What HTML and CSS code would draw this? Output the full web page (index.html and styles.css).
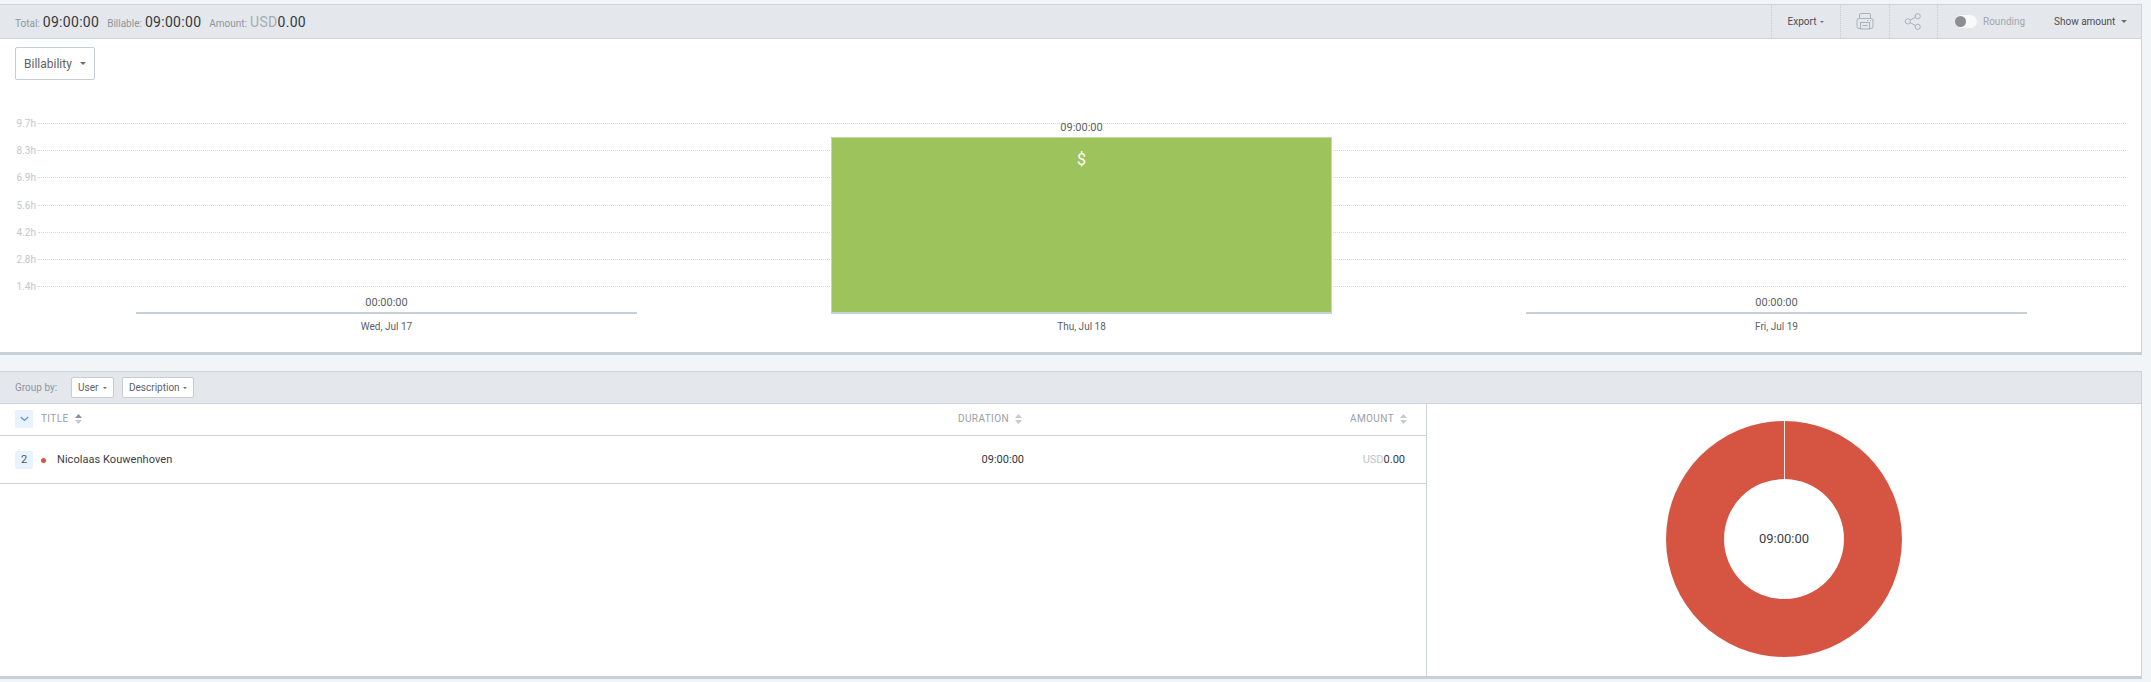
FILE: index.html
```html
<!DOCTYPE html>
<html lang="en">
<head>
    <meta charset="UTF-8">
    <title>Summary report</title>
    <link rel="stylesheet" href="styles.css">
</head>
<body>
    <!-- Bar chart panel -->
    <section class="panel panel-chart">
        <header class="bar">
            <div class="totals">
                <span class="total-label">Total:</span>
                <span class="total-value">09:00:00</span>
                <span class="total-label next">Billable:</span>
                <span class="total-value">09:00:00</span>
                <span class="total-label next">Amount:</span>
                <span class="total-value"><span class="currency">USD</span>0.00</span>
            </div>
            <div class="tools">
                <div class="tool tool-export">Export <i class="caret small"></i></div>
                <div class="tool tool-icon">
                    <svg width="18" height="17" viewBox="0 0 18 17" fill="none" stroke="#a9b1b8" stroke-width="1">
                        <path d="M3.5 5.5V2a1.5 1.5 0 0 1 1.5-1.5h8A1.5 1.5 0 0 1 14.500 2v3.500"/>
                        <rect x="1" y="5.500" width="16" height="10" rx="2"/>
                        <rect x="4.500" y="9.500" width="9" height="6.500" fill="#e4e8ed"/>
                        <path d="M6.500 12.500h5M11 7.500h1M14 7.500h1"/>
                    </svg>
                </div>
                <div class="tool tool-icon">
                    <svg width="18" height="17" viewBox="0 0 18 17" fill="none" stroke="#a9b1b8" stroke-width="1">
                        <circle cx="13.700" cy="3.200" r="2.600"/>
                        <circle cx="13.700" cy="13.800" r="2.600"/>
                        <circle cx="3.800" cy="8.400" r="2.600"/>
                        <path d="M6.100 7.200l5.300-2.900M6.100 9.600l5.300 3"/>
                    </svg>
                </div>
                <div class="rounding">
                    <span class="toggle"><span class="knob"></span></span>
                    <span class="rounding-label">Rounding</span>
                </div>
                <div class="show-amount">Show amount <i class="caret"></i></div>
            </div>
        </header>

        <button class="select-btn">Billability <i class="caret"></i></button>

        <div class="chart">
            <div class="grid-row"><span class="tick">9.7h</span><span class="line"></span></div>
            <div class="grid-row"><span class="tick">8.3h</span><span class="line"></span></div>
            <div class="grid-row"><span class="tick">6.9h</span><span class="line"></span></div>
            <div class="grid-row"><span class="tick">5.6h</span><span class="line"></span></div>
            <div class="grid-row"><span class="tick">4.2h</span><span class="line"></span></div>
            <div class="grid-row"><span class="tick">2.8h</span><span class="line"></span></div>
            <div class="grid-row"><span class="tick">1.4h</span><span class="line"></span></div>

            <div class="days">
                <div class="day">
                    <span class="day-value">00:00:00</span>
                    <div class="day-bar empty"></div>
                    <span class="day-name">Wed, Jul 17</span>
                </div>
                <div class="day">
                    <span class="day-value">09:00:00</span>
                    <div class="day-bar filled"><span class="dollar">$</span></div>
                    <span class="day-name">Thu, Jul 18</span>
                </div>
                <div class="day">
                    <span class="day-value">00:00:00</span>
                    <div class="day-bar empty"></div>
                    <span class="day-name">Fri, Jul 19</span>
                </div>
            </div>
        </div>
    </section>

    <!-- Grouped table and donut -->
    <section class="panel panel-table">
        <header class="bar bar-group">
            <span class="group-label">Group by:</span>
            <button class="group-btn btn-user">User <i class="caret small"></i></button>
            <button class="group-btn btn-desc">Description <i class="caret small"></i></button>
        </header>

        <div class="split">
            <div class="table-side">
                <div class="table-row table-head">
                    <div class="col-title">
                        <span class="square">
                            <svg width="9" height="6" viewBox="0 0 9 6" fill="none" stroke="#5b8fc9" stroke-width="1.2"><path d="M.8 1l3.700 3.500L8.200 1"/></svg>
                        </span>
                        <span class="th">TITLE</span>
                        <svg class="sort" width="7" height="10" viewBox="0 0 7 10"><path d="M3.500 0L7 4H0z" fill="#8b9096"/><path d="M0 6h7l-3.500 4z" fill="#c6cacf"/></svg>
                    </div>
                    <div class="col-duration">
                        <span class="th">DURATION</span>
                        <svg class="sort" width="7" height="10" viewBox="0 0 7 10"><path d="M3.500 0L7 4H0z" fill="#c6cacf"/><path d="M0 6h7l-3.500 4z" fill="#c6cacf"/></svg>
                    </div>
                    <div class="col-amount">
                        <span class="th">AMOUNT</span>
                        <svg class="sort sort-end" width="7" height="10" viewBox="0 0 7 10"><path d="M3.500 0L7 4H0z" fill="#c6cacf"/><path d="M0 6h7l-3.500 4z" fill="#c6cacf"/></svg>
                    </div>
                </div>
                <div class="table-row table-body">
                    <div class="col-title">
                        <span class="square count">2</span>
                        <span class="dot"></span>
                        <span class="name">Nicolaas Kouwenhoven</span>
                    </div>
                    <div class="col-duration cell-time">09:00:00</div>
                    <div class="col-amount cell-amount"><span class="usd">USD</span>0.00</div>
                </div>
            </div>
            <div class="donut-side">
                <div class="donut">
                    <span class="seam"></span>
                    <div class="donut-hole">09:00:00</div>
                </div>
            </div>
        </div>
    </section>
</body>
</html>
```

FILE: styles.css
```css
* {
    box-sizing: border-box;
}
body {
    margin: 0;
    padding: 4px 9px 3px 0;
    background-color: #f2f5f8;
    font-family: Roboto, "Liberation Sans", sans-serif;
    color: #4a4f55;
}
.panel {
    background-color: white;
    border-top: 1px solid #ccd3da;
    border-right: 1px solid #ccd3da;
    border-bottom: 3px solid #c8d0d7;
}
.panel-chart {
    height: 351px;
}
.panel-table {
    margin-top: 16px;
    height: 308px;
}
.bar {
    height: 34px;
    display: flex;
    align-items: center;
    justify-content: space-between;
    background-color: #e4e8ed;
    border-bottom: 1px solid #ccd3da;
}
.totals {
    display: flex;
    align-items: baseline;
    padding-left: 15px;
}
.total-label {
    font-size: 10px;
    color: #8f959b;
    margin-right: 3px;
}
.total-label.next {
    margin-left: 8px;
}
.total-value {
    font-size: 14px;
    letter-spacing: 0.3px;
    color: #33383d;
}
.currency {
    color: #a5abb1;
}
.tools {
    display: flex;
    align-items: center;
    height: 100%;
}
.tool {
    height: 100%;
    display: flex;
    align-items: center;
    justify-content: center;
    border-left: 1px dotted #c6ccd2;
    font-size: 10px;
}
.tool-export {
    width: 69px;
    gap: 4px;
}
.tool-icon {
    width: 48.5px;
}
.rounding {
    height: 100%;
    display: flex;
    align-items: center;
    border-left: 1px dotted #c6ccd2;
    padding-left: 17px;
    width: 117px;
    font-size: 10px;
    color: #a0a6ac;
}
.toggle {
    flex-shrink: 0;
    width: 22px;
    height: 13px;
    border-radius: 7px;
    background-color: #f8f9fa;
    margin-right: 6px;
    display: flex;
    align-items: center;
}
.knob {
    width: 11px;
    height: 11px;
    border-radius: 50%;
    background-color: #8b8f94;
}
.show-amount {
    width: 87px;
    font-size: 10px;
    display: flex;
    align-items: center;
    gap: 6px;
}
.caret {
    display: inline-block;
    width: 0;
    height: 0;
    border-left: 3px solid transparent;
    border-right: 3px solid transparent;
    border-top: 3px solid #6a6f75;
}
.caret.small {
    border-left-width: 2.5px;
    border-right-width: 2.5px;
    border-top-width: 2.5px;
}

/* Bar chart */
.select-btn {
    display: flex;
    align-items: center;
    justify-content: space-between;
    width: 80px;
    height: 33px;
    margin: 8px 0 0 15px;
    padding: 0 8px;
    background-color: white;
    border: 1px solid #c5ccd3;
    border-radius: 2px;
    font-family: inherit;
    font-size: 12px;
    color: #5d6267;
}
.chart {
    position: relative;
    height: 242px;
    margin-top: 30px;
}
.grid-row {
    height: 27.17px;
    display: flex;
    align-items: center;
    padding-right: 15px;
}
.tick {
    width: 36px;
    text-align: right;
    font-size: 10px;
    color: #c2c6ca;
}
.line {
    flex: 1;
    margin-left: 2px;
    border-top: 1px dotted #d8dbde;
}
.days {
    position: absolute;
    top: 0;
    bottom: 0;
    left: 136px;
    display: flex;
    gap: 194px;
    padding-bottom: 18px;
}
.day {
    width: 501px;
    display: flex;
    flex-direction: column;
    justify-content: flex-end;
    align-items: center;
}
.day-value {
    font-size: 11px;
    line-height: 14px;
    margin-bottom: 2px;
    color: #5a5f64;
}
.day-bar {
    width: 100%;
}
.day-bar.empty {
    height: 2px;
    background-color: #c8d0d7;
}
.day-bar.filled {
    height: 177px;
    display: flex;
    justify-content: center;
    background-color: #9dc45c;
    border: 1px solid #c5d8a8;
    border-bottom: 2px solid #c8d0d7;
}
.dollar {
    margin-top: 12px;
    font-size: 16px;
    line-height: 20px;
    color: white;
}
.day-name {
    margin-top: 6px;
    font-size: 10px;
    line-height: 14px;
    color: #5a5f64;
}

/* Table */
.bar-group {
    height: 32px;
    justify-content: flex-start;
    padding-left: 15px;
}
.group-label {
    width: 56px;
    font-size: 10px;
    color: #8f959b;
}
.group-btn {
    display: flex;
    align-items: center;
    justify-content: space-between;
    height: 21px;
    padding: 0 6px;
    background-color: white;
    border: 1px solid #c5ccd3;
    border-radius: 2px;
    font-family: inherit;
    font-size: 10px;
    color: #5d6267;
}
.btn-user {
    width: 43px;
}
.btn-desc {
    width: 72px;
    margin-left: 8px;
}
.split {
    display: flex;
    height: 272px;
}
.table-side {
    width: 1427px;
    border-right: 1px solid #ccd3da;
}
.table-row {
    display: flex;
    align-items: center;
    padding-left: 15px;
    border-bottom: 1px solid #ccd3da;
}
.table-head {
    height: 32px;
    padding-bottom: 2px;
}
.table-body {
    height: 48px;
}
.col-title {
    width: 900px;
    display: flex;
    align-items: center;
}
.col-duration {
    width: 109px;
    display: flex;
    justify-content: flex-end;
    align-items: center;
    font-size: 11px;
}
.col-amount {
    width: 381px;
    display: flex;
    justify-content: flex-end;
    align-items: center;
}
.th {
    font-size: 10px;
    letter-spacing: 0.4px;
    color: #9aa0a6;
}
.sort {
    margin-left: 6px;
    margin-right: 2px;
}
.sort-end {
    margin-right: -2px;
}
.square {
    width: 18px;
    height: 18px;
    display: flex;
    align-items: center;
    justify-content: center;
    background-color: #e8f3fd;
    border-radius: 2px;
    margin-right: 8px;
}
.count {
    font-size: 11px;
    color: #4a5560;
}
.dot {
    width: 5px;
    height: 5px;
    margin: 1px 11px 0 0;
    border-radius: 50%;
    background-color: #d55542;
}
.name {
    font-size: 11px;
    letter-spacing: 0.05px;
    color: #3b4046;
}
.cell-time,
.cell-amount {
    font-size: 11px;
    color: #33383d;
}
.usd {
    color: #c0c4c9;
}
.donut-side {
    flex: 1;
    display: flex;
    justify-content: flex-start;
    align-items: flex-start;
    padding: 17px 0 0 239px;
}
.donut {
    position: relative;
    width: 236px;
    height: 236px;
    border-radius: 50%;
    background-color: #d55542;
    display: flex;
    align-items: center;
    justify-content: center;
}
.seam {
    position: absolute;
    top: 0;
    left: 117.5px;
    width: 1px;
    height: 60px;
    background-color: #f0e6e2;
}
.donut-hole {
    position: relative;
    width: 120px;
    height: 120px;
    border-radius: 50%;
    background-color: white;
    display: flex;
    align-items: center;
    justify-content: center;
    font-size: 13px;
    color: #3b4046;
    padding-bottom: 1px;
}
```
